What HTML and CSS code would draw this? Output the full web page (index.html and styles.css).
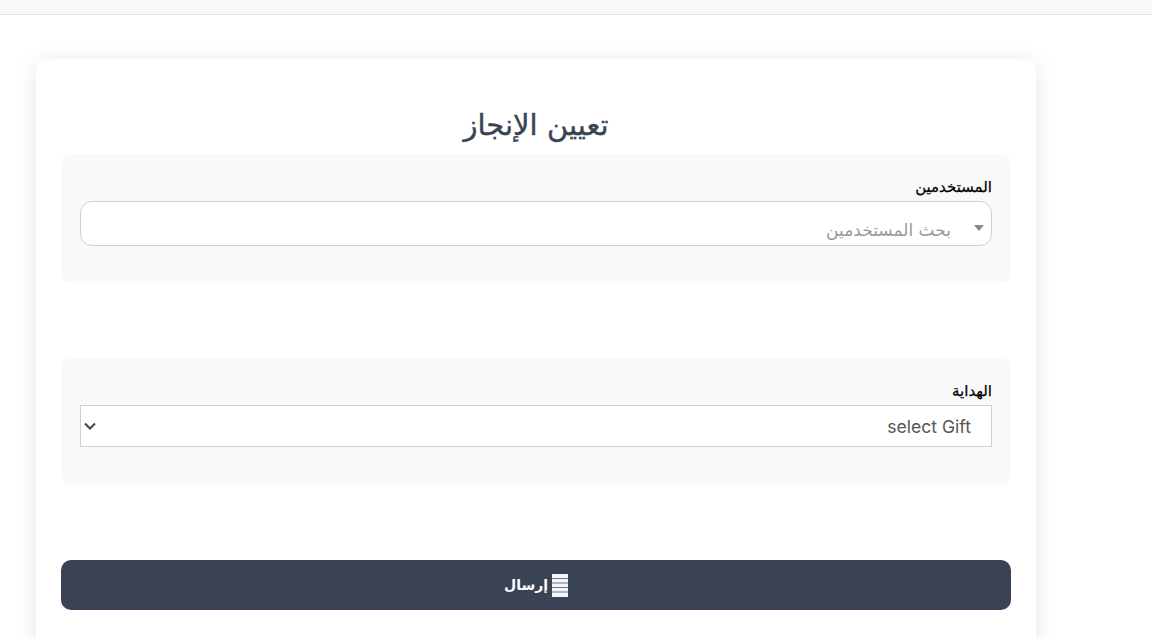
FILE: index.html
```html
<!DOCTYPE html>
<html lang="ar" dir="rtl">
<head>
<meta charset="UTF-8" />
<meta name="viewport" content="width=device-width, initial-scale=1" />
<title>تعيين الإنجاز</title>
<link rel="stylesheet" href="styles.css">
</head>
<body>
<div class="top-bar"></div>

<main class="page">
  <form class="card" onsubmit="event.preventDefault();">
    <h2 class="card-title">تعيين الإنجاز</h2>

    <section class="field-group users-group">
      <label class="field-label">المستخدمين</label>
      <div class="search-select">
        <span class="search-arrow"></span>
        <span class="search-placeholder">بحث المستخدمين</span>
      </div>
    </section>

    <section class="field-group gift-group">
      <label class="field-label" for="gift">الهداية</label>
      <div class="select-wrap">
        <select class="gift-select" id="gift" name="gift">
          <option>select Gift</option>
        </select>
        <svg class="select-chevron" viewBox="0 0 12 8" aria-hidden="true" focusable="false">
          <path d="M1 1.5 L6 6.5 L11 1.5" fill="none" stroke="#444" stroke-width="2" />
        </svg>
      </div>
    </section>

    <button class="btn-submit" type="submit">
      <svg class="btn-icon" viewBox="0 0 16 23" aria-hidden="true" focusable="false">
        <rect x="0" y="0" width="16" height="23" fill="#f4f6fa" />
        <path d="M0 4.5h16M0 9h16M0 13.5h16M0 18h16" stroke="#6a7484" stroke-width="1" />
      </svg>
      إرسال
    </button>
  </form>
</main>
</body>
</html>
```

FILE: styles.css
```css
/* Reset and base */
* {
  box-sizing: border-box;
}
html, body {
  overflow: hidden;
}
body {
  margin: 0;
  font-family: Inter, "Noto Sans", sans-serif;
  background: #ffffff;
  color: #000;
}

/* Top bar */
.top-bar {
  height: 15px;
  background: #f8f9fb;
  border-bottom: 1px solid #dfe2e8;
}

/* Card */
.page {
  padding: 44px 116px 40px 36px;
}
.card {
  width: 1000px;
  padding: 25px 25px 40px;
  background: #ffffff;
  border-radius: 12px;
  box-shadow: 0 4px 24px rgb(0 0 0 / 0.1);
}
.card-title {
  margin: 24px 0 0;
  height: 46px;
  line-height: 34px;
  text-align: center;
  font-family: "DejaVu Sans", sans-serif;
  font-size: 29px;
  font-weight: 500;
  -webkit-text-stroke: 0.4px #3a4354;
  color: #3a4354;
}

/* Field groups */
.field-group {
  padding: 24px 19px 38px;
  background: #f8f9fb;
  border-radius: 10px;
}
.users-group {
  height: 129px;
  margin-bottom: 75px;
}
.gift-group {
  height: 127px;
  margin-bottom: 75px;
}
.field-label {
  display: block;
  height: 23px;
  line-height: 18px;
  font-family: "DejaVu Sans", sans-serif;
  font-size: 15px;
  font-weight: 500;
  -webkit-text-stroke: 0.25px #000;
  color: #000;
}

/* Users search select */
.search-select {
  display: flex;
  align-items: center;
  gap: 23px;
  height: 45px;
  padding: 0 7px 0 0;
  background: #ffffff;
  border: 1px solid #cdd0da;
  border-radius: 12px;
}
.search-arrow {
  width: 0;
  height: 0;
  margin-top: 8px;
  border-left: 5px solid transparent;
  border-right: 5px solid transparent;
  border-top: 6px solid #888;
}
.search-placeholder {
  padding-top: 12px;
  font-family: "DejaVu Sans", sans-serif;
  font-size: 17px;
  color: #999;
}

/* Gift select */
.select-wrap {
  position: relative;
}
.gift-select {
  display: block;
  width: 100%;
  height: 42px;
  padding: 0 20px;
  appearance: none;
  background: #ffffff;
  border: 1px solid #cdd0da;
  border-radius: 0;
  font-family: Inter, sans-serif;
  font-size: 17.6px;
  color: #555;
}
.select-chevron {
  position: absolute;
  left: 4px;
  top: 17px;
  width: 12px;
  height: 8px;
}

/* Submit */
.btn-submit {
  display: flex;
  align-items: center;
  justify-content: center;
  gap: 4px;
  width: 100%;
  height: 50px;
  background: #3a4354;
  border: none;
  border-radius: 10px;
  font-family: "DejaVu Sans", sans-serif;
  font-size: 14px;
  font-weight: 600;
  color: #ffffff;
  cursor: pointer;
}
.btn-icon {
  width: 16px;
  height: 23px;
}
```
